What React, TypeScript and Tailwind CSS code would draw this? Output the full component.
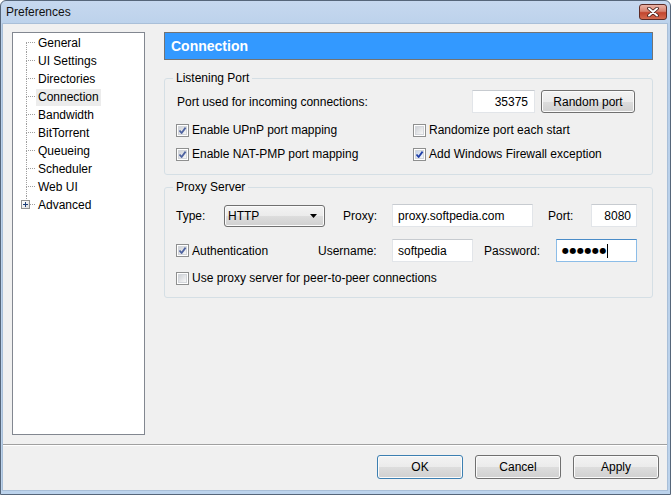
import React from 'react';

const treeItems = [
  'General',
  'UI Settings',
  'Directories',
  'Connection',
  'Bandwidth',
  'BitTorrent',
  'Queueing',
  'Scheduler',
  'Web UI',
  'Advanced',
];

const btn =
  'flex items-center justify-center rounded-[3px] border bg-[linear-gradient(to_bottom,#f3f3f3,#ebebeb_50%,#dddddd_50%,#d0d0d0)] shadow-[inset_0_0_0_1px_#fbfbfb] text-[12px] leading-[14px] text-black';

const field = 'flex h-[23px] items-center border border-[#e2e5e9] border-t-[#c7cbd0] bg-white text-[12px]';

const CheckBox: React.FC<{ checked?: boolean; strong?: boolean }> = ({ checked, strong }) => (
  <span className="flex h-[13px] w-[13px] shrink-0 items-center justify-center border border-[#8e8f8f] bg-white">
    <span
      className={`relative h-[9px] w-[9px] border border-[#d3d6db] ${
        strong ? 'bg-[linear-gradient(135deg,#c8d4e6,#f4f7fb)]' : 'bg-[linear-gradient(135deg,#cfd2d7,#f7f7f7)]'
      }`}
    >
      {checked && (
        <svg viewBox="0 0 9 9" className="absolute left-[-1px] top-[-1px] h-[9px] w-[9px]">
          <path
            d="M1.5 4.5 L3.6 7 L7.6 1.6"
            fill="none"
            stroke={strong ? '#1f3fa8' : '#4d62a0'}
            strokeWidth="1.8"
            strokeLinejoin="round"
          />
        </svg>
      )}
    </span>
  </span>
);

const CheckRow: React.FC<{ label: string; checked?: boolean; strong?: boolean }> = ({ label, checked, strong }) => (
  <div className="flex h-[18px] items-center gap-[3px]">
    <CheckBox checked={checked} strong={strong} />
    <span className="leading-[14px]">{label}</span>
  </div>
);

const Group: React.FC<{ title: string; className?: string; children: React.ReactNode }> = ({
  title,
  className,
  children,
}) => (
  <fieldset className={`rounded-[3px] border border-[#d5dfe5] ${className ?? ''}`}>
    <legend className="ml-[8px] px-[3px] text-[12px] leading-[14px]">{title}</legend>
    {children}
  </fieldset>
);

export default function App() {
  return (
    <div className="flex h-[495px] w-[671px] flex-col overflow-hidden rounded-t-[6px] border border-[#56667a] bg-[linear-gradient(to_bottom,#c6d8ef,#b9d0ea_30px,#bcd3ec)] font-['Liberation_Sans',Arial,sans-serif] text-[12px] text-black">
      {/* title bar */}
      <div className="flex h-[22px] shrink-0 items-center justify-between pl-[5px] pr-[3px]">
        <span className="leading-[14px] text-[#111]">Preferences</span>
        <div className="mb-[1px] flex h-[16px] w-[28px] items-center justify-center rounded-[3px] border border-[#5d2b25] bg-[linear-gradient(to_bottom,#eab3a6,#d7826f_45%,#c2452e_55%,#d46a4f)]">
          <svg viewBox="0 0 14 10" className="h-[10px] w-[14px]">
            <path d="M3 1.5 L11 8.5 M11 1.5 L3 8.5" stroke="#3b1a16" strokeWidth="3.6" strokeLinecap="round" />
            <path d="M3 1.5 L11 8.5 M11 1.5 L3 8.5" stroke="#ffffff" strokeWidth="2" strokeLinecap="round" />
          </svg>
        </div>
      </div>

      {/* client area */}
      <div className="mb-[3px] ml-[1px] mr-[2px] flex flex-1 flex-col border border-[#a9bfd8] bg-[#f0f0f0]">
        <div className="flex gap-[19px] pl-[9px] pt-[8px]">
          {/* tree */}
          <div className="h-[403px] w-[133px] shrink-0 border border-[#828790] bg-white pt-[1px]">
            {treeItems.map((label, i) => {
              const first = i === 0;
              const last = i === treeItems.length - 1;
              return (
                <div key={label} className="flex h-[18px] items-center">
                  <span className="relative ml-[13px] flex h-full w-[9px] shrink-0 flex-col">
                    <span
                      className={`h-[9px] w-full border-b border-dotted border-[#a0a0a0] ${first ? '' : 'border-l'}`}
                    />
                    <span className={`h-[9px] w-full ${last ? '' : 'border-l border-dotted border-[#a0a0a0]'}`} />
                    {last && (
                      <span className="absolute left-[-5px] top-[4px] flex h-[9px] w-[9px] items-center justify-center border border-[#919191] bg-[linear-gradient(135deg,#ffffff,#dcdcdc)]">
                        <svg viewBox="0 0 7 7" className="h-[7px] w-[7px]">
                          <path d="M1 3.5 H6 M3.5 1 V6" stroke="#1e3f7a" strokeWidth="1" />
                        </svg>
                      </span>
                    )}
                  </span>
                  <span
                    className={`ml-[1px] px-[2px] leading-[17px] ${label === 'Connection' ? 'bg-[#ececec]' : ''}`}
                  >
                    {label}
                  </span>
                </div>
              );
            })}
          </div>

          {/* right pane */}
          <div className="flex w-[489px] flex-col">
            <div className="flex h-[28px] items-center border border-[#737373] bg-[#3399ff] pl-[6px] text-[14px] font-bold text-white">
              Connection
            </div>

            <Group title="Listening Port" className="mt-[11px]">
              <div className="pb-[11px] pl-[11px] pr-[17px] pt-[5px]">
                <div className="flex h-[23px] items-center">
                  <span className="ml-[1px] flex-1 leading-[14px]">Port used for incoming connections:</span>
                  <div className={`${field} h-[21px] w-[63px] justify-end pr-[6px]`}>35375</div>
                  <div className={`${btn} ml-[6px] h-[23px] w-[94px] border-[#707070]`}>Random port</div>
                </div>
                <div className="mt-[8px] grid grid-cols-[237px_1fr]">
                  <CheckRow label="Enable UPnP port mapping" checked />
                  <CheckRow label="Randomize port each start" />
                </div>
                <div className="mt-[6px] grid grid-cols-[237px_1fr]">
                  <CheckRow label="Enable NAT-PMP port mapping" checked />
                  <CheckRow label="Add Windows Firewall exception" checked strong />
                </div>
              </div>
            </Group>

            <Group title="Proxy Server" className="mt-[5px]">
              <div className="pb-[10px] pl-[11px] pt-[10px]">
                <div className="flex h-[23px] items-center">
                  <span className="w-[48px] leading-[14px]">Type:</span>
                  <div className="flex h-[22px] w-[101px] items-center justify-between rounded-[3px] border border-[#707070] bg-[linear-gradient(to_bottom,#f3f3f3,#ebebeb_50%,#dddddd_50%,#d0d0d0)] pl-[3px] pr-[7px] shadow-[inset_0_0_0_1px_#fbfbfb]">
                    <span className="leading-[14px]">HTTP</span>
                    <svg viewBox="0 0 7 4" className="h-[4px] w-[7px]">
                      <path d="M0 0 H7 L3.5 4 Z" fill="#000" />
                    </svg>
                  </div>
                  <span className="ml-[18px] w-[49px] leading-[14px]">Proxy:</span>
                  <div className={`${field} w-[141px] pl-[5px]`}>proxy.softpedia.com</div>
                  <span className="ml-[15px] w-[43px] leading-[14px]">Port:</span>
                  <div className={`${field} w-[46px] justify-end pr-[5px]`}>8080</div>
                </div>

                <div className="mt-[12px] flex h-[23px] items-center">
                  <div className="w-[142px]">
                    <CheckRow label="Authentication" checked />
                  </div>
                  <span className="w-[74px] leading-[14px]">Username:</span>
                  <div className={`${field} w-[81px] pl-[5px]`}>softpedia</div>
                  <span className="ml-[11px] w-[72px] leading-[14px]">Password:</span>
                  <div className="flex h-[23px] w-[81px] items-center border border-[#8cbde8] border-t-[#4a8cc8] bg-white pl-[5px]">
                    <span className="font-['DejaVu_Sans',sans-serif] text-[8px] leading-[10px] tracking-[0.5px]">
                      ●●●●●●
                    </span>
                    <span className="h-[14px] w-px bg-black" />
                  </div>
                </div>

                <div className="mt-[7px]">
                  <CheckRow label="Use proxy server for peer-to-peer connections" />
                </div>
              </div>
            </Group>
          </div>
        </div>

        <div className="mt-[9px] h-[2px] border-b border-t border-b-white border-t-[#a0a0a0]" />

        <div className="flex justify-end gap-[12px] pr-[8px] pt-[9px]">
          <div className={`${btn} h-[24px] w-[86px] border-[#3c7fb1] shadow-[inset_0_0_0_1px_#9fd8f6]`}>OK</div>
          <div className={`${btn} h-[24px] w-[86px] border-[#707070]`}>Cancel</div>
          <div className={`${btn} h-[24px] w-[86px] border-[#707070]`}>Apply</div>
        </div>
      </div>
    </div>
  );
}
